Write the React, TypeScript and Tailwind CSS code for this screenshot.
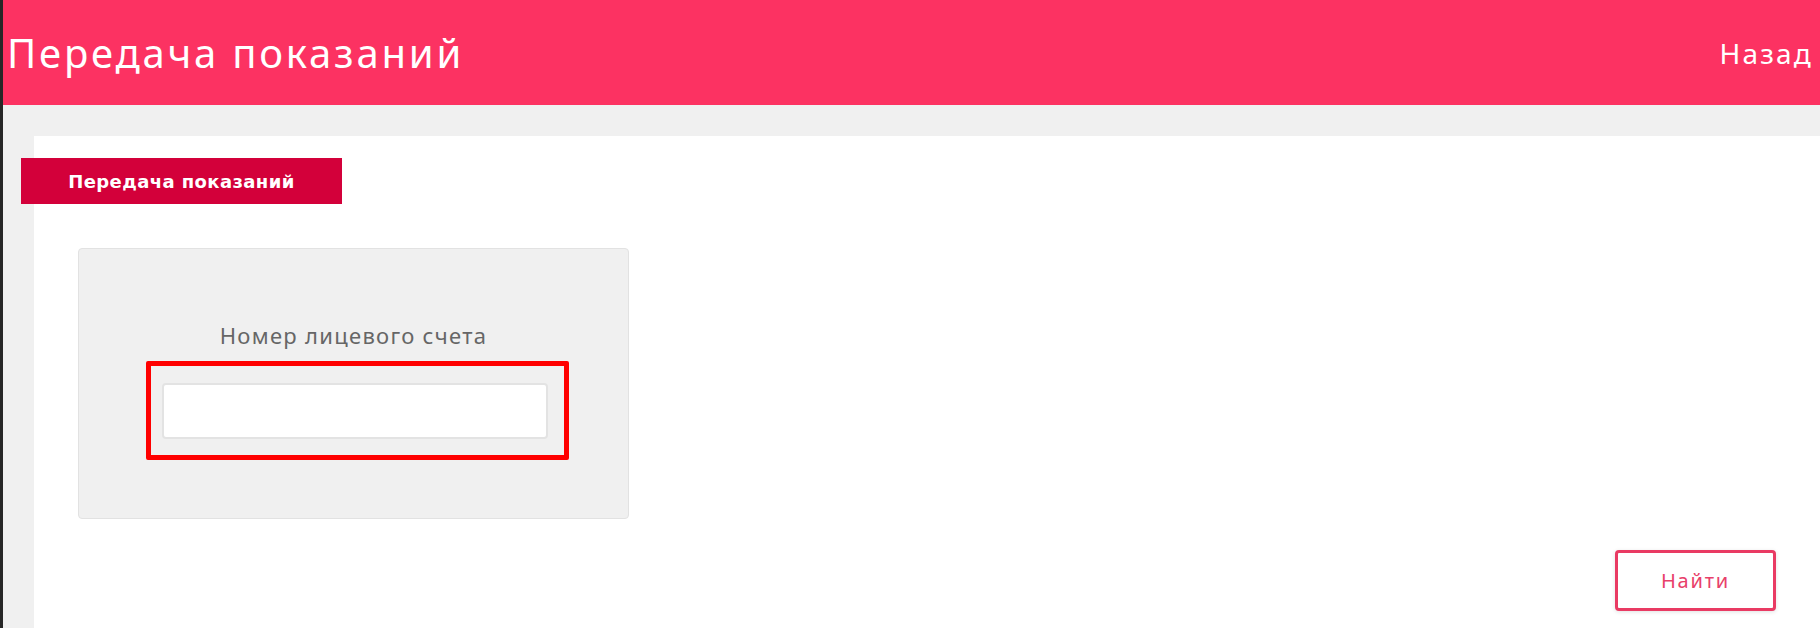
export default function App() {
    return (
        <div className="flex h-[628px] w-full flex-col overflow-hidden border-l-[3px] border-[#262626] bg-[#f0f0f0] font-['Noto_Sans',sans-serif]">
            <header className="flex h-[105px] shrink-0 items-center justify-between bg-[#fc3262] pl-[4px] pr-[7px] text-white">
                <h1 className="text-[40px] font-normal leading-none tracking-[2.8px]">Передача показаний</h1>
                <a href="#" className="text-[28px] leading-none tracking-[2.2px]">
                    Назад
                </a>
            </header>

            <div className="flex flex-1 flex-col pl-[31px] pt-[31px]">
                <main className="flex flex-1 flex-col bg-white">
                    <div className="ml-[-13px] mt-[22px] flex h-[46px] w-[321px] items-center justify-center bg-[#d3003a]">
                        <span className="font-['DejaVu_Sans',sans-serif] text-[18px] font-bold tracking-[0.4px] text-white">
                            Передача показаний
                        </span>
                    </div>

                    <div className="ml-[44px] mt-[44px] flex h-[271px] w-[551px] flex-col items-center rounded-[4px] border border-[#e2e2e2] bg-[#f0f0f0] pt-[74px]">
                        <label className="text-[22px] leading-[24px] tracking-[1.3px] text-[#666666]">Номер лицевого счета</label>
                        <div className="ml-[8px] mt-[14px] h-[99px] w-[423px] rounded-[2px] border-[5px] border-[#ff0000] pl-[11px] pt-[17px]">
                            <input
                                type="text"
                                className="h-[56px] w-[386px] rounded-[4px] border-2 border-[#e3e3e3] bg-white px-3 outline-none"
                            />
                        </div>
                    </div>

                    <div className="mt-[31px] flex justify-end pr-[44px]">
                        <button className="h-[61px] w-[161px] rounded-[4px] border-[3px] border-[#e93a63] bg-white text-[20px] tracking-[1.8px] text-[#e8406a] shadow-[0_1px_4px_rgba(0,0,0,0.12)]">
                            Найти
                        </button>
                    </div>
                </main>
            </div>
        </div>
    );
}
